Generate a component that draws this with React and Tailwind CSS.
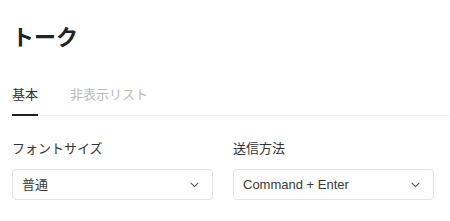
import React from "react";

function Chevron() {
  return (
    <svg width="9" height="6" viewBox="0 0 9 6" fill="none" className="shrink-0">
      <path d="M1 1.2 L4.5 4.6 L8 1.2" stroke="#555" strokeWidth="1.1" strokeLinecap="round" strokeLinejoin="round" />
    </svg>
  );
}

function Select({ value }) {
  return (
    <div className="h-[31px] border border-[#e3e3e3] rounded-[4px] flex items-center justify-between pl-[9px] pr-[13px] text-[13px] text-[#3a3a3a] leading-none">
      <span>{value}</span>
      <Chevron />
    </div>
  );
}

export default function App() {
  return (
    <div
      className="w-[450px] h-[221px] bg-white overflow-hidden pl-3"
      style={{ fontFamily: '"Liberation Sans", "Noto Sans CJK JP", sans-serif' }}
    >
      <h1 className="pt-[27px] text-[22px] leading-[22px] font-bold text-[#222]">トーク</h1>
      <div className="mt-[39px] flex border-b border-[#f0f0f0] text-[13px] leading-[13px]">
        <div className="pb-[13px] border-b-2 border-[#222] -mb-px text-[#333]">基本</div>
        <div className="ml-8 pb-[13px] text-[#bbb]">非表示リスト</div>
      </div>
      <div className="mt-[26px] w-[422px] grid grid-cols-2 gap-5">
        <div>
          <div className="text-[13px] leading-[14px] text-[#333] mb-[13px]">フォントサイズ</div>
          <Select value="普通" />
        </div>
        <div>
          <div className="text-[13px] leading-[14px] text-[#333] mb-[13px]">送信方法</div>
          <Select value="Command + Enter" />
        </div>
      </div>
    </div>
  );
}
